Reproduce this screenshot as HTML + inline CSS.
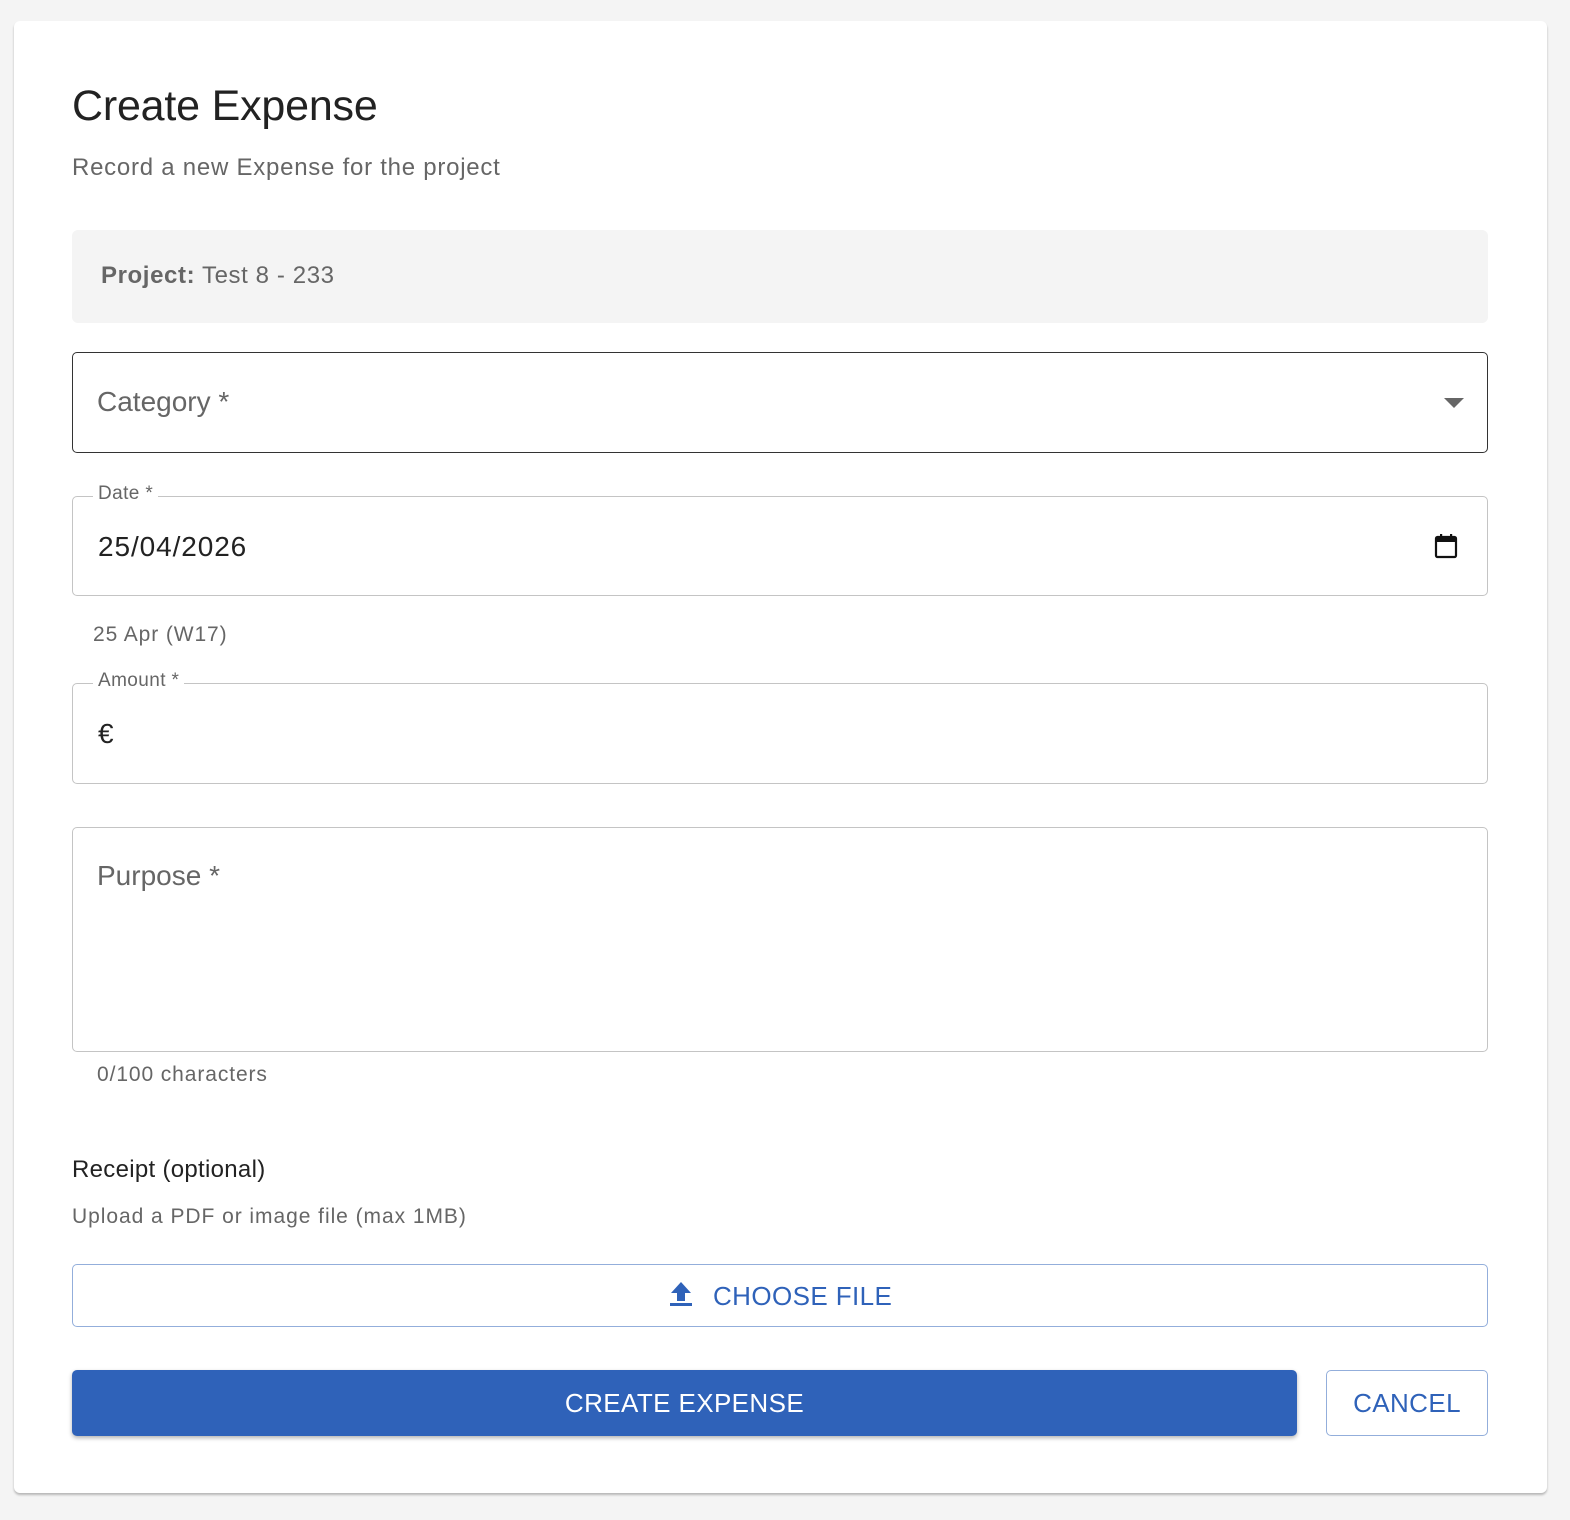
<!DOCTYPE html>
<html><head><meta charset="utf-8"><style>
*{box-sizing:border-box;margin:0;padding:0}
body{width:1570px;height:1520px;background:#f4f4f4;font-family:"Liberation Sans",Arial,sans-serif;position:relative;overflow:hidden}
.card{position:absolute;left:14px;top:21px;width:1533px;height:1472px;background:#fff;border-radius:6px;box-shadow:0 2px 2px rgba(0,0,0,.25)}
.a{position:absolute}
.field{position:absolute;left:72px;width:1416px;border:1px solid #c4c4c4;border-radius:5px}
.lbl{position:absolute;background:#fff;padding:0 5px;font-size:19px;color:#666;top:-14px;left:20px;letter-spacing:.4px}
</style></head><body>
<div class="card"></div>
<div class="a" style="left:72px;top:82px;font-size:43px;color:#222;letter-spacing:-.2px">Create Expense</div>
<div class="a" style="left:72px;top:154px;font-size:24px;color:#666;letter-spacing:.75px">Record a new Expense for the project</div>
<div class="a" style="left:72px;top:230px;width:1416px;height:93px;background:#f4f4f4;border-radius:6px"></div>
<div class="a" style="left:101px;top:262px;font-size:24px;color:#666;letter-spacing:.6px"><b>Project:</b> Test 8 - 233</div>
<div class="field" style="top:352px;height:101px;border:1.5px solid #333">
 <div class="a" style="left:24px;top:33px;font-size:28px;color:#666">Category *</div>
 <svg class="a" style="left:1371px;top:45px" width="20" height="10"><path d="M0 0h20L10 10z" fill="#666"/></svg>
</div>
<div class="field" style="top:496px;height:100px">
 <div class="lbl" style="top:-14px">Date *</div>
 <div class="a" style="left:25px;top:34px;font-size:28px;color:#222;letter-spacing:.9px">25/04/2026</div>
 <svg class="a" style="left:1361px;top:35px" width="24" height="28" viewBox="0 0 24 28"><rect x="2" y="5" width="20" height="20" rx="1.5" fill="none" stroke="#111" stroke-width="2.2"/><rect x="2" y="5" width="20" height="5" fill="#111"/><rect x="6" y="2" width="2.2" height="5" fill="#111"/><rect x="16" y="2" width="2.2" height="5" fill="#111"/></svg>
</div>
<div class="a" style="left:93px;top:623px;font-size:21px;color:#666;letter-spacing:.9px">25 Apr (W17)</div>
<div class="field" style="top:683px;height:101px">
 <div class="lbl">Amount *</div>
 <div class="a" style="left:25px;top:34px;font-size:28px;color:#222">€</div>
</div>
<div class="field" style="top:827px;height:225px">
 <div class="a" style="left:24px;top:32px;font-size:28px;color:#666">Purpose *</div>
</div>
<div class="a" style="left:97px;top:1063px;font-size:21px;color:#666;letter-spacing:.9px">0/100 characters</div>
<div class="a" style="left:72px;top:1156px;font-size:24px;color:#222;letter-spacing:.3px">Receipt (optional)</div>
<div class="a" style="left:72px;top:1205px;font-size:21px;color:#666;letter-spacing:.95px">Upload a PDF or image file (max 1MB)</div>
<div class="a" style="left:72px;top:1264px;width:1416px;height:63px;border:1px solid #93aedb;border-radius:5px"></div>
<svg class="a" style="left:669px;top:1281px" width="24" height="26" viewBox="0 0 24 26"><path d="M12 1L2 12h6v8h8v-8h6z" fill="#2f62b9"/><rect x="1" y="22" width="22" height="3" fill="#2f62b9"/></svg>
<div class="a" style="left:713px;top:1281px;font-size:26px;color:#2f62b9;letter-spacing:.4px">CHOOSE FILE</div>
<div class="a" style="left:72px;top:1370px;width:1225px;height:66px;background:#2f62b9;border-radius:5px;box-shadow:0 2px 4px rgba(0,0,0,.3);color:#fff;font-size:26px;text-align:center;line-height:66px;letter-spacing:.4px">CREATE EXPENSE</div>
<div class="a" style="left:1326px;top:1370px;width:162px;height:66px;border:1px solid #93aedb;border-radius:5px;color:#2f62b9;font-size:26px;text-align:center;line-height:64px;letter-spacing:.4px">CANCEL</div>
</body></html>
